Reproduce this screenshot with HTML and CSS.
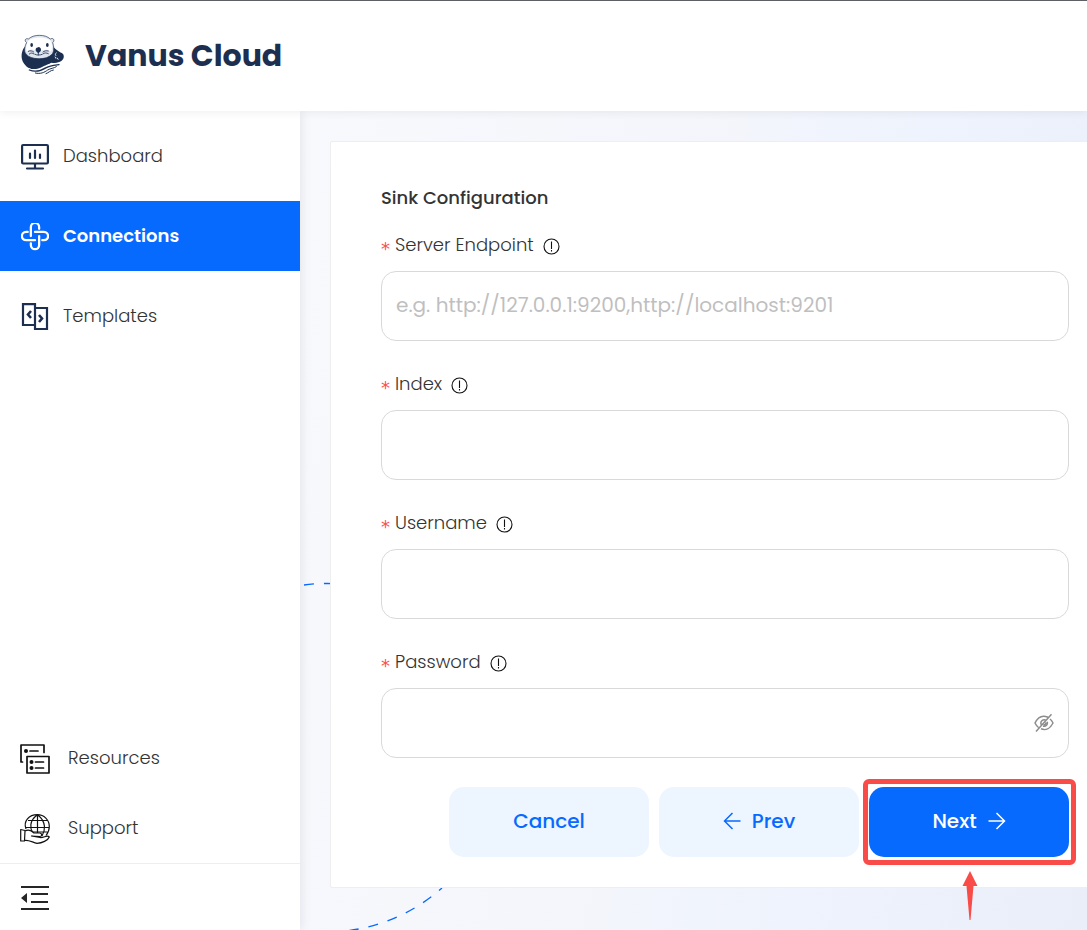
FILE: index.html
```html
<!DOCTYPE html>
<html lang="en">
<head>
<meta charset="utf-8">
<meta name="viewport" content="width=device-width, initial-scale=1">
<title>Vanus Cloud</title>
<link rel="stylesheet" href="styles.css">
</head>
<body>
<div class="app">
  <header class="header">
    <svg class="logo" viewBox="30 24 135 126" aria-hidden="true">
      <path fill="#1c2f50" d="M43 64C33 78 33 96 39 108C48 124 62 132 80 131C98 130 110 118 124 110C136 113 152 110 159 100C164 91 161 82 153 80C144 76 139 71 131 64Z"/>
      <path fill="#dfe5ee" stroke="#1c2f50" stroke-width="2" d="M50 50C42 44 46 35 55 39C64 31 76 28 88 28C101 28 112 31 121 39C130 34 136 43 128 50C132 62 133 76 126 85C116 95 103 98 87 98C70 98 56 94 48 84C41 76 44 60 50 50Z"/>
      <path fill="#fff" d="M54 46C64 32 110 30 123 46C128 58 128 70 123 77C110 68 99 71 87 78C75 70 63 67 50 77C47 68 49 55 54 46Z"/>
      <g fill="#1c2f50">
        <ellipse cx="65" cy="57" rx="4" ry="6"/><ellipse cx="112" cy="57" rx="4" ry="6"/>
        <path d="M77 72C77 63 83 67 85 63C91 64 93 67 93 72C93 77 88 78 85 82C82 78 77 77 77 72Z"/>
      </g>
      <g fill="none" stroke="#1c2f50" stroke-width="2.5" stroke-linecap="round">
        <path d="M85 78V87M75 85C80 88 90 88 97 85M55 76C61 73 66 74 71 78M58 84C63 80 67 80 72 84M115 75C108 73 103 75 99 78M115 83C109 80 104 80 100 83"/>
      </g>
      <path fill="none" stroke="#fff" stroke-width="5" d="M54 128C80 138 96 126 110 119C122 114 136 114 150 112"/>
      <g fill="none" stroke="#1c2f50" stroke-linecap="round">
        <path stroke-width="4" d="M58 132C80 141 96 133 109 125C119 119 132 118 147 116"/>
        <path stroke-width="3" d="M76 141C91 145 104 139 113 132C121 127 132 127 139 122M108 143C115 141 121 133 130 132"/>
      </g>
      <g fill="none" stroke="#fff" stroke-width="2.5"><path d="M140 80C134 83 136 88 139 90M135 92L138 98M141 95L145 101"/></g>
    </svg>
    <h1 class="brand">Vanus Cloud</h1>
  </header>

  <div class="body">
    <aside class="sidebar">
      <nav class="nav">
        <a class="nav-item" href="#">
          <svg class="icon" viewBox="0 0 28 28" fill="none" stroke="#1c2f50" stroke-width="2.200" stroke-linecap="round" aria-hidden="true">
            <rect x="1.100" y="2" width="25.800" height="18.500" rx="1"/><path d="M14 21V25M6 25.500H22M9 10.500V15M14 7.500V15M19 11.500V15"/>
          </svg>
          <span class="nav-text">Dashboard</span>
        </a>
        <a class="nav-item active" href="#" aria-current="page">
          <svg class="icon" viewBox="0.500 1.400 27 27" fill="none" stroke="#fff" stroke-width="2.200" stroke-linecap="round" aria-hidden="true">
            <path d="M10 14V5.500C10 0 18 0 18 5.500V7M14 10H22.500C28 10 28 18 22.500 18H21M18 14V22.500C18 28 10 28 10 22.500V21M14 18H5.500C0 18 0 10 5.500 10H7"/>
          </svg>
          <span class="nav-text">Connections</span>
        </a>
        <a class="nav-item" href="#">
          <svg class="icon" viewBox="0 0 28 28" fill="none" stroke="#1c2f50" stroke-width="2.200" aria-hidden="true">
            <path d="M13 22H2V1.100H14V5M14 5H26V26H14Z"/><path stroke-width="2.600" d="M10 8L7 11.500L10 15M18 12L21 15.500L18 19"/>
          </svg>
          <span class="nav-text">Templates</span>
        </a>
      </nav>
      <nav class="nav-foot">
        <a class="foot-item" href="#">
          <svg class="foot-icon" viewBox="0 0 30 30" fill="none" stroke="#111" stroke-width="1.700" stroke-linecap="round" stroke-linejoin="round" aria-hidden="true">
            <path d="M2.500 18H1V1H24V8.500M7 12.500H29V29H7Z"/><path d="M10 7H18M15.500 18H23.500M15.500 24H23.500"/>
            <g fill="#111" stroke="none"><circle cx="6" cy="7" r="2"/><circle cx="11.500" cy="18" r="2"/><circle cx="11.500" cy="24" r="2"/></g>
          </svg>
          <span class="nav-text">Resources</span>
        </a>
        <a class="foot-item" href="#">
          <svg class="foot-icon" viewBox="0 0 30 30" fill="none" stroke="#111" stroke-width="1.200" stroke-linejoin="round" aria-hidden="true">
            <path d="M6 15C3 7 9 .7 17.500 .7C24 .7 29.300 6 29.300 12.500C29.300 16 28 19 26 21.500M17.500 .7V21M17.500 .7C8.500 7 10.500 15 12.500 18M17.500 .7C27 8 25 17 22 22M8 6.500H27M5.500 13.500H29.200M8 18H27.500"/>
            <path fill="#fff" d="M.7 15.500L5 16.500L4.500 27H.7ZM5 17C9 15 12 17 14 19H20C22.500 20 22 22 20 22.500L11.500 22L20 23.500C24 24 27 20.500 29.300 23C28 26.500 22 29 17 29.300C12 28 8 25.500 4.500 26.500Z"/>
          </svg>
          <span class="nav-text">Support</span>
        </a>
      </nav>
      <button class="collapse" type="button" aria-label="Collapse menu">
        <svg class="icon" viewBox="0 0 28 28" fill="#262626" aria-hidden="true">
          <path d="M0 2H28V4H0ZM10 9H27V11H10ZM10 17H27V19H10ZM0 24H28V26H0ZM0 14L6 9V19Z"/>
        </svg>
      </button>
    </aside>

    <main class="main">
      <svg class="orbit" width="240" height="370" viewBox="0 0 240 370" fill="none" stroke="#076aff" stroke-width="1.300" aria-hidden="true">
        <path stroke-dasharray="10 10" d="M4 25A174 174 0 0 1 40 24"/>
        <path stroke-dasharray="10 10" stroke-dashoffset="6" d="M142 328A174 174 0 0 1 30 372"/>
      </svg>
      <form class="card">
        <h2 class="title">Sink Configuration</h2>
        <div class="field">
          <div class="label-row"><label for="endpoint"><span class="star">*</span>Server Endpoint</label>
            <svg class="info" viewBox="0 0 17 17" fill="none" stroke="#111" stroke-width="1.100" aria-hidden="true"><circle cx="8.500" cy="8.500" r="7.500"/><path d="M8.500 3.500V11M8.500 12V13.500"/></svg></div>
          <div class="control"><input id="endpoint" type="text" placeholder="e.g. http://127.0.0.1:9200,http://localhost:9201"></div>
        </div>
        <div class="field">
          <div class="label-row"><label for="index"><span class="star">*</span>Index</label>
            <svg class="info" viewBox="0 0 17 17" fill="none" stroke="#111" stroke-width="1.100" aria-hidden="true"><circle cx="8.500" cy="8.500" r="7.500"/><path d="M8.500 3.500V11M8.500 12V13.500"/></svg></div>
          <div class="control"><input id="index" type="text"></div>
        </div>
        <div class="field">
          <div class="label-row"><label for="username"><span class="star">*</span>Username</label>
            <svg class="info" viewBox="0 0 17 17" fill="none" stroke="#111" stroke-width="1.100" aria-hidden="true"><circle cx="8.500" cy="8.500" r="7.500"/><path d="M8.500 3.500V11M8.500 12V13.500"/></svg></div>
          <div class="control"><input id="username" type="text"></div>
        </div>
        <div class="field">
          <div class="label-row"><label for="password"><span class="star">*</span>Password</label>
            <svg class="info" viewBox="0 0 17 17" fill="none" stroke="#111" stroke-width="1.100" aria-hidden="true"><circle cx="8.500" cy="8.500" r="7.500"/><path d="M8.500 3.500V11M8.500 12V13.500"/></svg></div>
          <div class="control"><input id="password" type="password">
            <button class="eye" type="button" aria-label="Show password">
              <svg width="20" height="20" viewBox="0 0 20 20" fill="none" stroke="#8c8c8c" stroke-width="1.500" aria-hidden="true">
                <path d="M14 4.300C8 1.500 3.500 5 1 10C2 12 3 13.500 4.500 14.500M7 15.800C12 18 16.500 15 19 10C18.200 8.400 17.200 7 16 6M12 7.200C9 5.500 5.500 9 7.500 12M9 13.200C12 14 14 11.500 13.200 8.800M9.500 11.800C11 12 12 11 11.800 9.500M17.500 1.200L2 18.500"/>
              </svg>
            </button></div>
        </div>
        <div class="actions">
          <button class="btn" type="button">Cancel</button>
          <button class="btn" type="button">
            <svg width="18" height="18" viewBox="0 0 18 18" fill="none" stroke="currentColor" stroke-width="1.500" aria-hidden="true"><path d="M17.500 9H1.500M9.500 1L1.500 9L9.500 17"/></svg>
            Prev</button>
          <div class="marked">
            <button class="btn primary" type="submit">Next
              <svg width="18" height="18" viewBox="0 0 18 18" fill="none" stroke="currentColor" stroke-width="1.500" aria-hidden="true"><path d="M.5 9H16.500M8.500 1L16.500 9L8.500 17"/></svg>
            </button>
            <svg class="pointer" width="16" height="50" viewBox="0 0 16 50" fill="#f94b48" aria-hidden="true"><path d="M8 0L15.500 15H11.500L8.500 49H7.500L4.500 15H.5Z"/></svg>
          </div>
        </div>
      </form>
    </main>
  </div>
</div>
</body>
</html>
```
FILE: styles.css
```css
* { box-sizing: border-box; }
body {
  margin: 0;
  font-family: Poppins, Inter, "Liberation Sans", sans-serif;
  font-size: 18px;
  color: #333;
  background: #fff;
}
button, input { font: inherit; }
svg { flex: none; display: block; }

.app { display: flex; flex-direction: column; min-height: 100vh; overflow: hidden; }

.header {
  display: flex;
  align-items: center;
  gap: 20px;
  height: 111px;
  padding: 0 20px 2px;
  border-top: 1px solid #5d5e66;
  background: #fff;
  box-shadow: 0 2px 8px rgba(0, 0, 0, .06);
  position: relative;
  z-index: 2;
}
.logo { width: 45px; height: 42px; }
.brand { margin: 0; padding-top: 2px; font-size: 30px; font-weight: 700; line-height: 40px; color: #1c2f50; }

.body { display: flex; flex: 1; }

.sidebar {
  display: flex;
  flex-direction: column;
  flex: 0 0 300px;
  background: #fff;
  box-shadow: 2px 0 10px rgba(0, 0, 0, .08);
  position: relative;
  z-index: 1;
}
.nav { display: flex; flex-direction: column; gap: 10px; padding-top: 10px; flex: 1; }
.nav-item, .foot-item {
  display: flex;
  align-items: center;
  height: 70px;
  gap: 14px;
  padding: 2px 21px 0;
  color: #333;
  font-weight: 300;
  text-decoration: none;
}
.nav-text { padding-bottom: 4px; }
.active { background: #076aff; color: #fff; font-weight: 600; }
.icon { width: 28px; height: 28px; }
.foot-item { gap: 18px; padding: 2px 20px 0; }
.foot-icon { width: 30px; height: 30px; }
.collapse {
  display: flex;
  align-items: center;
  height: 67px;
  padding: 2px 21px 0;
  border: 0;
  border-top: 1px solid #eee;
  background: #fff;
}

.main {
  position: relative;
  flex: 1;
  min-width: 0;
  padding: 30px 0 42px 30px;
  background: linear-gradient(100deg, #f7f9fd 0%, #f5f6fb 40%, #eef3fd 68%, #e9eef9 100%);
}
.orbit { position: absolute; left: 0; bottom: 0; }

.card {
  position: relative;
  margin-right: -33px;
  padding: 39px 50px 30px;
  border: 1px solid #eee;
  border-radius: 2px;
  background: #fff;
}
.title { margin: 0 0 16px; font-size: 18px; font-weight: 500; line-height: 34px; }
.field { margin-bottom: 29px; }
.label-row {
  display: flex;
  align-items: center;
  gap: 9px;
  height: 40px;
  padding-bottom: 10px;
  font-weight: 300;
}
.label-row label { display: flex; gap: 5px; line-height: 26px; padding-bottom: 2px; }
.star { padding-top: 4px; font-family: "DejaVu Sans", sans-serif; font-weight: 400; line-height: 26px; height: 26px; color: #ff4d4f; }
.info { width: 17px; height: 17px; }
.control {
  display: flex;
  align-items: center;
  height: 70px;
  padding: 0 14px;
  border: 1px solid #d9d9d9;
  border-radius: 15px;
  background: #fff;
}
.control input {
  flex: 1;
  min-width: 0;
  height: 100%;
  padding: 0 0 2px;
  border: 0;
  outline: 0;
  background: none;
  font-size: 20px;
}
.control input::placeholder { color: #bfbfbf; opacity: 1; }
.eye { padding: 0; border: 0; background: none; }

.actions { display: flex; justify-content: flex-end; gap: 10px; }
.btn {
  display: flex;
  align-items: center;
  justify-content: center;
  gap: 11px;
  width: 200px;
  height: 70px;
  padding: 0 0 2px;
  border: 0;
  border-radius: 15px;
  background: #edf5ff;
  color: #076aff;
  font-size: 20px;
  font-weight: 500;
}
.marked { position: relative; }
.marked::before {
  content: "";
  position: absolute;
  inset: -8px -7px -8px -6px;
  border: 5px solid #f94b48;
  border-radius: 6px;
}
.primary { position: relative; background: #076aff; color: #fff; }
.pointer { position: absolute; top: 84px; left: 93px; }
```
